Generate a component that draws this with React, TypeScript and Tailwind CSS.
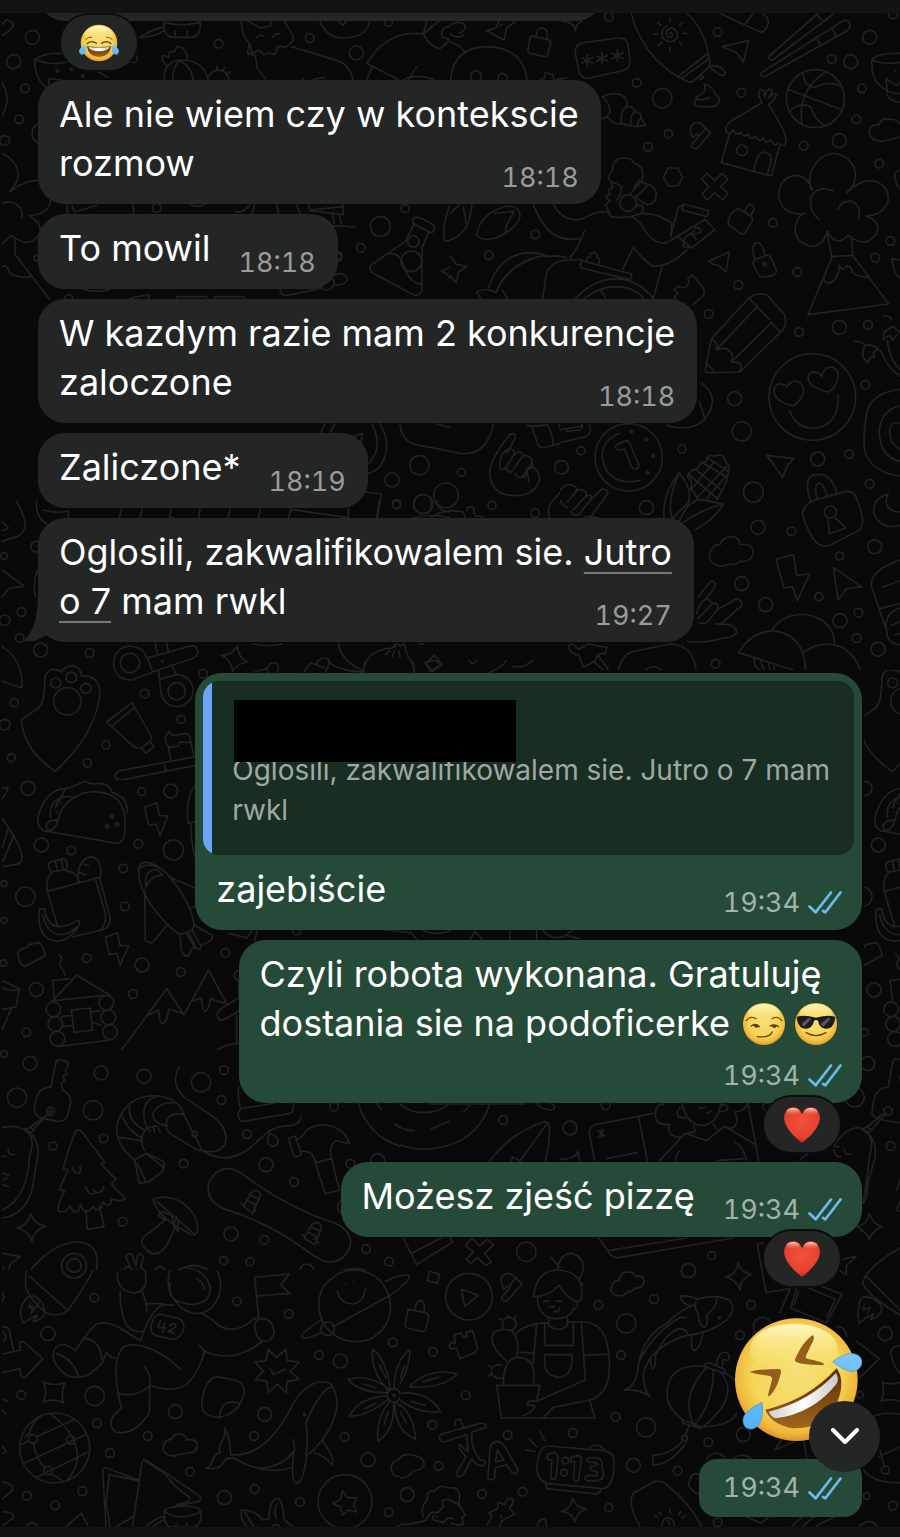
import React from 'react';

type Doodles = {
  x: number;
  y: number;
  w: number;
  h: number;
  left?: number;
  top?: number;
  circles: number[][];
  paths: string[];
};

// every sheet is drawn at three times its size, then placed at x / y
// left and top trim the part that a neighbouring sheet already draws
const sheets: Doodles[] = [
  {
    x: 0,
    y: 0,
    w: 450,
    h: 300,
    circles: [
      [97, 112, 21], [41, 185, 21], [75, 265, 13], [57, 358, 13], [14, 422, 15], [128, 400, 32],
      [656, 131, 13], [929, 114, 13], [1069, 159, 21], [1166, 67, 12], [400, 176, 12],
      [470, 624, 13], [1215, 626, 12], [1141, 679, 30], [1082, 743, 13], [1240, 724, 17], [1234, 784, 31],
      [1012, 770, 15], [110, 774, 8], [206, 897, 13], [980, 848, 22],
      [172, 212, 4], [214, 208, 3], [248, 228, 4],
    ],
    paths: [
      'M8 72 Q20 50 34 66 Q46 78 30 90 L8 106',
      'M104 178 Q104 240 140 262 M104 178 Q140 154 200 162 M104 178 Q150 198 200 186 M146 262 V236 L184 240 M292 214 L322 232',
      'M8 250 Q34 300 8 344',
      'M412 118 Q450 90 492 80 M420 114 Q470 108 492 92 M492 66 Q490 112 520 112 H572 Q602 112 602 66 M492 66 Q545 84 602 66 M526 92 V110 M562 92 V106',
      'M492 240 Q490 180 550 180 Q610 182 624 238 M518 240 Q518 200 540 182 Q575 200 580 240 M500 198 Q480 180 490 166 L506 172 Q505 148 522 156 L532 138 Q562 145 562 176',
      'M624 232 Q640 205 664 212 Q686 218 686 238 M652 210 L650 200 M668 212 L674 202 M680 224 L690 216',
      'M724 60 Q724 110 748 130 L742 160 L766 166 L772 205 L796 236 M748 130 L756 160 L776 150 L790 164 L808 158 L824 164 L834 138 L856 142 L880 122 L878 104 L850 60 M740 60 L780 84 L812 78 L812 60 M768 114 Q776 104 790 108 M818 110 Q828 98 840 102 M874 140 L1000 178 Q1050 190 1058 238 M905 240 L910 236 M940 238 L974 232',
      'M960 64 Q980 116 1036 114 Q1100 112 1110 62 M1016 64 L1028 76 L1040 62',
      'M1100 190 L1130 150 Q1190 90 1270 102 L1320 60 M1270 102 Q1290 140 1320 146 L1350 120 M1270 102 L1280 64 M1350 80 Q1320 80 1326 110 L1350 120 M1100 190 L1196 240 M1100 240 L1116 202 M1226 238 L1250 200 M1212 238 Q1250 220 1300 238',
      'M202 612 V640 M216 616 L224 636 L290 616 M398 612 Q402 630 400 642 M570 612 Q590 625 612 614 M706 636 Q730 640 752 612 M764 612 L756 642 M830 612 L836 642 M890 612 L900 642 M925 612 L930 632 L1030 644 V614 M930 630 L1028 620 M998 642 L1002 672 M1018 642 L1024 674 M990 680 Q1020 674 1064 682',
      'M1244 652 Q1256 648 1300 674 Q1308 686 1296 698 Q1286 698 1240 670 Q1234 660 1244 652 M1242 672 L1216 724 L1112 796 Q1106 804 1116 818 L1240 884 Q1264 890 1266 866 V742 L1286 698 M1166 762 Q1200 756 1212 800 Q1230 850 1264 852',
      'M1350 615 Q1325 680 1334 722 H1350 M1350 800 L1324 814 Q1345 820 1350 835',
      'M996 754 H1010 Q1036 770 1010 784 M1000 826 L1024 820 Q1046 830 1040 842 Q1036 854 1000 856 M840 868 Q842 888 860 886 L970 864',
      'M8 460 Q90 510 28 576 Q100 522 146 552 M8 610 Q40 596 62 626 Q70 640 64 654 M152 600 Q150 640 88 648 Q130 670 118 700 Q90 750 34 706 L8 730 M8 800 Q20 790 30 820 Q60 836 94 830',
      'M44 720 L46 764 L150 900',
      'M384 900 Q400 888 450 886 L442 900 M528 900 L530 890 H620 V900 M642 900 V890 H730 L736 900 M250 868 Q290 880 330 868',
    ],
  },
  {
    x: 450,
    y: 0,
    w: 450,
    h: 320,
    circles: [
      [476, 50, 13], [560, 248, 13], [637, 295, 29], [803, 96, 13], [874, 278, 13], [1145, 177, 13], [1259, 112, 21],
      [1202, 185, 21], [1236, 265, 13],
      [655, 401, 12], [594, 441, 13], [1061, 437, 13], [1168, 422, 21], [1219, 358, 13],
      [1288, 491, 13], [1329, 43, 13], [969, 668, 13], [256, 703, 13], [116, 766, 13], [1042, 816, 13],
      [865, 855, 13], [776, 942, 13], [1276, 773, 13], [1321, 723, 13], [876, 451, 16], [1096, 296, 87],
      [944, 792, 5], [534, 609, 25],
    ],
    paths: [
      'M0 74 Q30 60 44 74 Q50 90 30 100 M0 100 Q20 120 42 104 M0 126 Q30 134 46 158 M2 238 Q10 140 115 140 Q220 146 231 238 M62 238 Q62 210 78 212 Q94 214 94 238 M144 238 Q144 220 158 220 Q172 222 172 238 M270 238 L284 234 L286 216 L308 224 L312 240 M322 238 L350 234',
      'M110 92 L162 120 L170 84 L194 66 M110 92 L138 84 L148 62 M336 64 Q376 66 376 92 Q380 68 396 64 M148 80 L156 72',
      'M244 108 L292 118 Q302 120 302 130 L294 162 Q292 170 284 170 L240 160 Q232 158 234 150 L240 114 Q242 108 244 108 M258 110 Q260 80 280 84 Q298 92 290 116',
      'M402 128 L504 114 Q530 112 534 136 L540 182 Q542 206 518 212 L418 234 Q392 238 386 210 L376 160 Q372 134 402 128 M412 164 V198 M396 174 L428 190 M428 172 L396 190 M456 158 V192 M440 168 L472 184 M472 166 L440 184 M502 150 V184 M486 160 L518 176 M518 158 L486 176',
      'M544 42 Q580 170 684 230 L716 246 Q728 248 736 238 L774 204 Q784 196 778 178 Q766 90 712 42 M684 230 L772 162 M694 236 L778 176 M740 234 L756 226 L762 232 L748 240 M782 204 L788 196 Q820 200 826 218 Q824 230 812 226 Z',
      'M660 100 Q664 94 668 102 Q668 114 656 112 Q644 104 650 92 Q666 76 680 94 Q688 116 668 124 Q640 128 636 104 Q634 84 652 78 M660 66 V54 M660 142 V154 M622 102 H612 M698 100 H710 M632 76 L624 68 M688 76 L698 66 M634 128 L624 136 M688 126 L696 134',
      'M816 140 L896 122 L880 186 L860 158 Z M814 42 L930 96 Q940 98 948 86 Q966 60 940 42 M886 72 L908 42',
      'M1102 42 L958 168 Q954 182 968 180 L1150 42 M1100 44 L1116 60 M934 218 L1180 62 Q1196 56 1200 74 Q1202 86 1188 94 L944 230 Q930 232 934 218 M1098 112 L1112 134 M1144 82 L1158 106',
      'M736 296 Q744 284 758 282 Q770 268 762 252 Q790 258 796 284 Q810 290 808 304 Q802 320 784 320 H750 Q732 320 734 306 Q740 294 760 300 L780 292',
      'M456 290 Q480 310 480 334 Q476 352 456 356 M458 290 Q490 274 516 286 Q536 300 530 320 Q510 332 514 370 Q496 380 474 352 M530 320 Q550 316 554 336 Q536 352 544 378 Q526 376 514 370 M554 336 Q574 336 574 354 Q564 360 562 380 L544 378 M574 354 L586 376 L562 380',
      'M722 394 Q718 376 736 368 Q750 364 762 380 L782 398 L742 444 Q734 450 724 440 Q722 434 730 428 L748 406 L742 402 L730 412 Q722 406 722 394 M748 406 L768 384',
      'M936 308 L838 366 Q822 384 830 398 Q842 404 850 390 Q860 412 872 396 Q880 416 894 402 Q902 424 916 408 Q926 430 940 414 Q948 434 962 420 Q972 442 986 430 Q1006 448 1008 416 Q1004 390 956 314 M936 308 Q922 284 930 268 Q944 266 944 290 Q952 260 966 270 Q964 286 956 294 Q970 276 980 284 Q972 302 956 314 M838 402 L814 488 L964 528 L988 440 M912 512 Q920 456 944 456 Q970 462 962 488 L952 524',
      'M1058 218 Q1062 260 1096 262 Q1130 242 1172 258 M1014 268 L1176 330 M1128 216 Q1040 270 1056 374 M1018 334 Q1050 304 1082 320 Q1100 370 1128 376',
      'M1350 160 Q1290 158 1266 178 Q1262 230 1286 254 Q1320 285 1350 280 M1266 178 Q1290 194 1350 188 M1308 236 L1340 256 L1350 248 M1308 236 L1312 276 M1335 212 H1336 M1310 282 Q1320 306 1350 306',
      'M1350 372 Q1340 356 1318 358 Q1294 352 1288 374 Q1258 372 1258 398 Q1262 424 1296 424 Q1320 420 1350 410',
      'M1084 570 Q1066 520 1108 478 Q1150 444 1192 476 Q1228 506 1210 556 L1190 578 Q1240 530 1282 546 Q1320 564 1314 604 Q1300 646 1248 648 Q1294 664 1280 700 Q1250 748 1194 706 Q1160 744 1132 694 Q1118 744 1078 738 Q1030 722 1036 680 Q1042 646 1064 640 Q1002 650 986 592 Q984 536 1034 526 Q1070 526 1088 568 M1148 572 Q1100 556 1084 590 Q1074 634 1108 658 M1164 628 Q1176 600 1204 604 Q1236 618 1226 656 M1130 694 L1146 772 L1074 944 L1316 912 L1208 766 L1204 710 M1144 770 L1206 766 M1168 796 Q1166 836 1142 848 Q1120 854 1122 828 M1168 796 Q1176 816 1188 800 Q1204 796 1206 816 Q1220 830 1254 832',
      'M484 546 Q466 530 488 512 Q486 476 522 474 Q546 474 552 490 Q586 496 576 544 Q540 580 540 586 M552 562 L568 542 L594 554 Q622 560 618 590 Q614 614 590 614 L556 592 L590 560 M484 546 L498 550 L514 560 L512 582 L500 600 M484 546 L488 562 L474 570 L480 582 L466 590 L480 604 L466 614 L474 628 Q472 654 502 652 Q540 654 576 640 L580 620 L560 614',
      'M654 504 L684 504 L698 532 L684 558 H656 L640 532 Z M754 536 L772 520 L794 542 L816 520 L834 538 L812 560 L834 580 L818 600 L794 578 L772 600 L756 582 L776 560 Z',
      'M250 614 Q290 720 364 718 L386 716 M310 612 Q340 670 400 656 Q440 630 480 636 M404 692 L382 742 L360 774 M576 640 Q620 640 666 668 L662 710 L684 626 Q690 616 700 618 M700 612 L776 632 L770 650 L696 630 Z M546 650 Q570 660 590 700 Q620 736 650 728 L680 710 L766 658 L794 690 L724 744 L682 708 M728 744 L700 740 Q700 704 726 700 L734 690 M734 682 Q754 682 752 696 L728 704 L740 720 M712 748 Q660 802 606 798 Q580 780 550 742 L518 808 M636 800 L610 895',
      'M0 720 Q60 700 66 612 M40 620 L48 668 M0 640 L28 614 M80 704 Q90 640 170 618 Q210 616 210 650 Q200 690 130 716 Q84 722 80 704 M134 640 L192 634 L168 680 L166 702 M2 768 L18 792 L50 800 L26 816 L18 848 L0 826',
      'M80 876 Q110 860 138 878 Q180 780 290 766 M116 862 Q150 760 240 758 Q270 758 290 770 Q320 764 350 774 M138 878 Q160 810 240 780 M158 872 L174 896 M80 876 L92 896 M278 896 L288 826 Q300 780 360 780 L392 778 M396 782 L544 822 Q548 838 536 838 L394 804 Q386 792 396 782 M408 784 Q410 768 422 770 Q416 756 432 758 Q446 762 440 772 L448 776 V790 M376 896 Q430 838 500 836 Q570 842 610 896 M402 896 Q450 860 495 860 Q560 862 580 896 M452 870 L466 892',
      'M834 664 Q842 634 864 626 L904 648 Q914 658 900 674 L884 700 Q876 706 868 698 L836 674 Z M886 636 Q886 616 904 612 Q922 628 898 648',
      'M776 784 L838 756 L828 816 L806 796 Q790 796 776 784 M908 790 L916 778 L950 766 Q962 766 966 780 L978 808 Q982 822 968 826 L940 832 Q928 832 924 820 Z M914 778 Q902 736 918 728 Q936 724 946 766',
      'M726 824 L758 860 Q768 880 758 890 L728 914 M726 824 L714 836 Q720 856 704 862 Q690 864 688 858 L672 868 L684 880 L672 892 L680 898 M784 1010 L898 894 Q920 876 950 884 L1004 944 Q1010 970 1000 990 M898 894 L966 968 L940 990 M922 920 L836 1010',
      'M1350 510 Q1330 516 1334 530 Q1340 560 1350 566 M1350 780 L1326 776 Q1330 820 1350 835 M1300 948 Q1326 945 1326 970 Q1330 985 1350 986',
    ],
  },
  {
    x: 560,
    y: 320,
    w: 340,
    h: 350,
    circles: [
      [717, 36, 13], [838, 22, 21], [924, 15, 13], [524, 236, 21], [545, 334, 29], [366, 387, 12], [206, 412, 101],
      [63, 392, 12], [5, 442, 20], [259, 563, 21], [580, 516, 30], [594, 622, 21], [694, 634, 13], [545, 791, 21],
      [617, 854, 21], [777, 830, 12], [839, 708, 12], [944, 680, 21], [929, 491, 13], [867, 402, 13],
      [773, 417, 21], [916, 194, 13], [757, 231, 130], [840, 902, 21], [895, 878, 13], [890, 954, 13],
      [954, 988, 21], [467, 1031, 13], [811, 576, 18], [215, 334, 4], [258, 358, 4], [279, 407, 4], [263, 459, 4],
    ],
    paths: [
      'M454 56 L436 150 Q434 158 444 158 L540 156 L660 38 Q680 24 676 0 M454 56 L506 0 M472 86 L554 0 M516 124 L636 6 M632 6 L662 36 M454 56 Q474 64 470 90 Q496 78 510 94 Q524 106 514 126 Q540 124 544 140 Q542 152 536 156 M438 130 L466 156',
      'M702 258 Q646 246 642 214 Q642 190 664 192 Q678 194 680 202 Q690 180 712 184 Q736 196 728 224 Q722 240 702 258 M806 216 Q746 204 744 174 Q748 154 766 156 Q784 160 784 170 Q794 136 820 142 Q840 154 832 180 Q826 204 806 216 M688 272 Q712 330 770 324 Q838 312 834 224',
      'M884 64 Q900 62 916 76 Q940 70 964 96 Q980 140 1020 168 M916 76 Q902 96 912 116 L924 128 L930 112 L944 112 L940 98 L950 90 M970 58 Q966 30 1000 20 L1018 36 M970 58 L990 46 L998 60 L1010 44 M982 62 Q988 120 1020 148',
      'M1020 208 Q930 220 920 280 Q904 370 920 410 Q950 460 1020 468 M1020 256 Q956 276 958 340 Q962 410 1020 424 M1020 310 Q996 300 988 330 Q988 370 1020 388',
      'M168 376 L196 362 Q206 362 210 372 L236 434 Q238 444 226 448 Q218 446 214 438 L194 388 L174 390 Q164 384 168 376 M178 340 Q118 366 128 420 Q146 500 240 482',
      'M426 190 Q480 230 440 290 Q400 340 320 316 M418 246 L436 300 M88 312 Q102 350 60 354 L0 368 M0 330 L64 318 M20 334 L60 330 Q68 325 66 312',
      'M314 602 Q300 530 358 458 Q400 510 384 550 Q340 590 334 602 M358 458 Q320 540 336 596 M358 604 Q380 546 420 538 L490 552 Q460 602 404 630 M490 552 Q430 566 368 608 M382 470 Q390 446 410 450 Q420 424 440 424 Q440 402 464 408 Q490 396 496 424 Q514 440 504 462 Q502 490 470 540 M382 470 Q400 480 392 506 Q408 522 412 538 M384 462 L470 534 M404 446 L486 512 M392 510 L464 424 M410 534 L500 440 M424 426 L500 470 M440 412 L504 454 M440 536 L500 466',
      'M620 406 L702 416 L682 436 L668 472 Z M752 544 Q730 480 758 466 Q810 450 830 516 M772 538 Q760 498 776 490 Q790 488 802 530 M764 540 L860 514 Q880 514 888 530 Q910 590 908 606 Q904 634 880 640 L810 676 Q780 684 760 658 Q728 600 728 580 Q730 554 764 540 M804 596 L808 642 L858 624 L824 592',
      'M984 522 Q930 540 944 586 Q968 632 1020 616 M984 522 Q964 572 1020 576 M480 738 Q446 732 448 702 Q454 674 480 674 Q490 648 518 650 Q540 654 540 674 Q580 670 580 698 Q574 728 540 724 Q530 736 510 732 Q490 740 480 738 M648 718 L700 704 L710 766 L748 762 L712 842 L698 800 L672 804 Z M820 742 L904 800 L860 806 L834 840 Z',
      'M1020 720 Q930 750 934 798 L980 932 Q980 970 1020 974 M966 802 L1020 782 M960 866 L1020 850 M994 916 L1020 904 M1020 864 Q970 880 980 932 M1006 944 L1020 940',
      'M0 540 Q6 558 22 562 M0 512 Q20 485 42 498 Q58 504 44 520 L22 546 M44 520 Q60 500 76 514 Q84 522 74 532 L40 570 M76 530 Q100 516 92 540 L56 584 Q38 590 32 574 M92 540 L124 508 Q142 504 144 520 L90 594 M74 590 H92 Q110 590 122 598',
      'M414 832 L448 788 Q462 778 466 794 Q464 806 432 842 M410 880 Q414 850 440 836 L458 850 L414 896 M458 850 Q476 846 474 866 L444 904 Q426 916 418 906 M474 868 L530 836 Q548 840 546 856 L484 910 M466 912 Q530 910 530 938 Q520 954 490 954 Q430 972 382 964',
      'M26 978 L36 970 L56 988 L84 972 L140 982 L136 1000 L114 1004 L106 1022 L70 1042 L56 1006 Q28 1000 26 978 M114 1006 L146 1050 M100 1024 L130 1050',
      'M176 1050 Q184 1004 220 994 L330 972 Q400 974 408 1050 M256 1050 Q280 1030 304 1050 M636 930 Q670 878 740 884 Q820 900 824 970 M536 998 Q570 936 640 932 Q730 944 736 1040 L736 1050 M536 998 L700 1050 M732 996 Q790 956 850 984 Q890 1010 900 1050 M582 1018 Q584 1044 600 1050 M602 1024 L612 1048 M626 1032 L630 1050 M642 1038 V1050',
    ],
  },
  {
    x: 0,
    y: 500,
    w: 450,
    h: 280,
    circles: [
      [12, 168, 10], [64, 336, 13], [14, 361, 16], [59, 414, 13], [122, 450, 21], [269, 459, 13], [434, 581, 13],
      [609, 521, 13], [543, 658, 12], [318, 735, 12], [262, 789, 12], [43, 608, 12], [14, 674, 16], [34, 773, 12],
      [390, 489, 29], [530, 574, 26], [167, 549, 15], [214, 532, 16], [258, 565, 15], [202, 604, 41],
      [1189, 14, 12], [1268, 14, 27], [487, 484, 2], [1345, 0, 35], [108, 140, 16],
    ],
    paths: [
      'M48 0 Q70 40 76 70 Q76 100 50 110 L6 124 M6 64 L26 84 L6 92 M110 0 Q104 50 140 72 M130 30 Q160 40 206 34 L204 56 M364 28 L358 54 M426 28 L420 54 M514 28 L508 50 L520 54 M600 28 L596 54 M690 28 L684 54 M780 28 L776 54 M872 28 L1040 52 M872 28 L866 54 M1044 28 L1046 52 M1138 0 L1130 54 M1240 54 Q1290 40 1350 52',
      'M6 210 L72 258 L26 266 L6 290 M106 290 Q98 250 112 210 M6 440 Q70 480 66 564 L6 544',
      'M64 658 L116 624 Q136 600 134 540 Q136 510 160 508 Q180 510 184 516 Q196 494 222 498 Q244 504 244 528 Q294 524 300 576 Q290 700 166 814 Q70 750 64 658',
      'M458 516 L396 540 Q346 540 340 492 Q346 440 392 438 Q434 444 440 474 L572 438 Q590 436 594 454 Q594 466 580 474 Z M444 478 L458 516 M466 430 L472 464 M500 430 L506 458 M476 512 L482 574 Q490 620 534 620 Q580 610 580 566 Q570 526 530 524 L514 496 M478 538 L530 524',
      'M664 466 Q696 466 712 438 Q714 472 742 486 Q712 490 698 514 Q694 480 664 466 M764 516 L800 506 L810 490 Q834 484 836 500 L832 516 M800 506 L804 518 M912 516 L932 488 L976 504 M948 492 Q962 468 984 476 Q992 490 976 516',
      'M1016 430 Q1020 480 1092 514 M1090 516 Q1096 450 1176 444 L1190 430 L1200 438 L1212 430 Q1220 470 1240 490 L1242 516 M1182 434 L1186 442 M1170 452 L1156 464 M1182 452 L1178 470 M1196 452 L1200 472 M760 432 Q800 442 846 432 M1255 430 Q1264 436 1272 430 M1276 490 L1304 466 L1326 494 L1298 514 Z',
      'M320 666 L396 608 L452 706 Q456 716 450 724 L424 744 Q414 746 404 742 Z M334 680 L404 622 M424 744 L438 760 L462 740 L450 724',
      'M586 770 L360 812 Q344 818 346 832 Q352 842 366 840 L588 796 M490 788 L498 812 M512 780 L506 742 Q490 720 500 704 L510 694 Q512 708 528 706 L556 700 Q572 702 572 726 L582 766 M506 742 L534 738 L540 726 L574 728',
    ],
  },
  {
    x: 0,
    y: 780,
    w: 260,
    h: 270,
    circles: [
      [84, 25, 21], [512, 33, 21], [425, 35, 12], [124, 195, 21], [214, 211, 13], [415, 191, 13], [520, 210, 30],
      [76, 350, 29], [370, 265, 13], [375, 379, 13], [260, 534, 13], [426, 555, 21], [676, 518, 13], [542, 576, 13],
      [109, 629, 21], [399, 642, 13], [79, 757, 13], [12, 311, 9], [12, 421, 9], [10, 549, 10],
      [336, 109, 5], [321, 139, 5], [351, 133, 5],
      [160, 688, 22], [166, 732, 22], [172, 776, 22], [319, 668, 22], [325, 712, 22], [330, 756, 22], [718, 586, 15],
    ],
    paths: [
      'M6 24 L24 22 Q20 40 6 56',
      'M130 152 L350 190 Q370 190 374 162 Q386 70 330 44 Q270 22 220 54 Q180 80 174 120 Q166 148 148 152 Q128 140 148 124 L174 118 M130 152 Q100 132 124 82 Q150 26 196 26 L218 20 L232 14 L252 4 L276 12 L304 10 Q330 14 336 38 Q386 50 380 98 M196 26 L184 52 M152 112 Q144 70 184 52 Q210 46 222 54 M184 52 Q172 64 166 84 M172 76 V78 M182 68 V70 M170 94 V96',
      'M434 82 L470 68 L478 106 L504 108 L480 166 L468 132 L446 136 Z M316 472 L352 458 L360 496 L386 498 L360 556 L350 520 L328 524 Z M8 118 Q60 190 66 230 Q68 250 46 254 L8 260 M26 142 L8 200 M42 166 L8 244',
      'M586 16 Q556 50 564 130 L584 126 M572 132 Q574 200 588 240',
      'M150 246 L190 236 Q200 238 202 260 Q200 268 190 270 L156 276 Q146 272 146 252 Z M166 242 L172 272 M184 238 L190 268 M156 276 Q134 300 142 334 L172 436 M142 334 L298 292 L330 410 Q334 440 306 450 L220 470 M198 272 Q232 276 238 306 M234 306 Q230 240 272 230 Q306 232 302 292 M238 278 L258 284 M250 252 L266 258 M286 296 L316 400 Q320 430 300 452 M118 388 L134 386 Q138 430 170 440 Q210 440 232 420 Q246 424 232 444 Q200 490 160 482 Q110 470 118 388 M128 404 Q140 460 180 464 Q212 462 230 440',
      'M420 252 Q450 234 500 280 Q570 360 582 430 Q582 452 564 456 L540 464 Q500 440 450 370 Q404 300 420 252 M438 320 Q430 270 470 268 L488 286 Q454 284 438 320 M420 262 Q470 240 510 292 L590 326 M434 330 L436 480 Q446 494 460 486 L500 436 M570 384 L590 378 M540 464 L544 510 Q548 530 564 528 L584 494 M584 436 L636 466 Q640 480 624 486 L606 494 M564 456 L590 506 Q604 510 602 496 L576 450 M560 462 L586 504',
      'M52 522 Q56 504 82 502 L86 494 L116 488 Q126 490 136 526 L78 558 Q66 560 60 546 Z M176 522 Q190 536 182 544 Q174 552 186 566 Q192 572 194 584 M158 602 L208 596 M158 602 L164 662 M156 664 L230 586 L330 646 M164 662 L310 646 M184 710 L214 706 M274 696 L300 692 M184 740 L218 736 M276 726 L304 736 M172 800 L330 780 M214 690 L270 684 L278 750 L222 758 Z',
      'M8 602 L58 626 L48 680 L8 688 M8 624 Q30 634 56 630 M34 686 L8 746',
      'M356 822 L500 626 L552 704 L626 570 L680 672 M356 822 H722 M444 706 L476 690 Q476 730 488 730 Q502 726 506 688 L520 692 L548 700 M574 664 L604 654 Q608 694 614 694 Q628 690 632 654 L642 660 L672 670 M722 650 L660 688 Q644 700 658 720 Q670 724 722 690 M710 706 V788 M636 822 Q670 790 722 790 M716 602 V648 M688 460 L740 474 L756 452 M764 484 L770 455',
    ],
  },
  {
    x: 0,
    y: 1050,
    w: 400,
    h: 220,
    circles: [
      [90, 40, 21], [303, 69, 21], [432, 79, 21], [51, 143, 29], [279, 181, 29], [603, 97, 29], [672, 60, 13], [664, 150, 13],
      [311, 265, 13], [159, 288, 12], [551, 341, 13], [741, 252, 13], [798, 344, 21], [882, 396, 13], [1002, 170, 13],
      [1051, 341, 13], [1133, 332, 21], [368, 515, 13], [693, 552, 21], [793, 569, 13], [671, 632, 12], [750, 635, 12],
      [480, 662, 12], [1098, 597, 13], [1167, 635, 13], [920, 663, 21], [1034, 470, 21], [222, 647, 37], [222, 647, 21],
      [152, 184, 12], [152, 184, 4], [584, 252, 8], [12, 12, 10],
    ],
    paths: [
      'M152 112 L168 36 Q174 26 186 30 Q206 34 204 46 L196 60 L202 72 L190 78 L194 92 L184 98 L188 122 Q214 130 212 160 L202 200 Q190 216 170 214 L118 202 Q100 190 104 170 Q108 112 152 112 M146 190 L98 240 M134 200 L90 232 M78 238 L92 232 L102 240 L90 248 Z',
      'M8 232 Q60 220 90 254 Q104 280 88 320 Q84 440 8 480 M74 236 Q116 260 114 310 Q108 350 100 400 Q86 490 8 504 M24 298 Q24 316 44 314 M8 318 L18 320 M8 370 L26 376 M8 404 L26 410 M10 390 L20 384',
      'M226 246 Q236 232 246 246 L314 336 L304 344 L348 388 L334 402 L374 444 Q372 456 350 450 L334 448 Q332 470 318 464 L308 456 Q306 484 286 478 L278 470 Q264 494 250 480 L242 464 Q236 492 220 484 L210 468 Q200 490 176 484 Q168 470 194 424 L178 418 L204 360 L190 356 Q200 310 226 246 M218 352 Q222 372 236 370 Q244 362 240 350 M256 410 Q268 438 286 430 M280 418 Q288 432 300 426 Q312 420 310 410 M258 480 L262 538 L312 530 L298 468',
      'M52 534 Q88 524 92 490 Q104 526 136 528 Q100 542 96 574 Q84 540 52 534 M8 610 L60 620 L30 644 L24 674 L8 652',
      'M404 330 Q340 280 352 220 Q380 130 480 138 Q540 150 552 196 L604 296 Q600 306 584 296 L510 250 Q490 230 504 204 Q520 186 552 194 M504 228 L480 222 Q454 210 460 186 Q476 158 520 158 M440 232 Q420 180 446 152 Q464 138 480 138 M432 240 Q380 210 390 170 M426 272 L358 262 M434 300 Q424 290 426 262 Q430 230 470 228 M446 232 L450 246 M460 232 L464 246 M474 234 L482 248 M366 200 Q390 250 428 264 M404 330 L438 310 L490 334 Q496 350 488 364 L446 396 L418 400 Z M412 340 L438 396 M438 310 L490 352',
      'M538 50 Q510 100 550 140 L640 200 Q690 240 674 284 Q650 316 604 300 Q680 350 750 294 L806 244 Q840 226 870 228 Q900 224 904 198 M808 250 Q796 280 816 290 Q838 286 834 268 Q826 254 808 250',
      'M716 110 Q712 150 722 176 M722 176 Q706 196 722 212 Q730 216 744 212 L870 190 Q884 186 880 160 M722 176 L820 160',
      'M866 264 L886 258 L904 314 L886 322 Q880 320 866 264 M892 268 Q910 260 920 240 Q960 216 1000 230 Q1040 246 1048 280 Q1020 276 1010 272 Q984 284 996 330 L1018 420 L976 432 L946 338 L996 326 M904 304 Q940 300 946 338',
      'M1074 160 Q1120 300 1280 298 M1130 160 L1144 180 M1186 222 Q1200 234 1216 238 M1200 160 L1212 172',
      'M670 476 Q616 450 626 400 Q650 346 700 358 Q720 364 760 396 Q880 480 1010 522 Q1060 546 1050 590 Q1030 640 980 636 Q960 632 900 588 Q800 516 670 476 M730 470 L752 430 Q770 410 782 434 L758 490 Z M738 450 L770 466 M748 434 L778 448 M722 458 L734 470 M760 472 L768 486 M912 564 L934 526 Q954 508 966 530 L944 584 Z M922 546 L952 562 M932 530 L962 544 M906 552 L916 562 M944 566 L956 580',
      'M460 448 Q500 430 550 460 Q600 500 592 546 Q580 564 560 546 Q470 500 460 448 M470 454 L580 550 M488 484 L474 496 L496 510 L430 562 Q416 576 440 600 Q464 620 484 604 Q510 580 524 530 L534 546 L534 516 M488 486 L516 496 L520 526 L530 500',
      'M78 718 Q70 680 104 646 Q160 584 224 576 Q286 574 292 630 Q290 680 272 718 M84 674 L134 718',
      'M352 718 L350 680 Q348 662 364 660 Q380 668 376 690 L360 690 M374 660 Q380 644 394 656 Q400 680 386 680 L376 676 M390 652 L378 620 Q388 602 398 620 L408 648 L412 618 Q426 604 430 622 L422 652 Q440 662 438 700 L432 718 M412 656 L416 690',
      'M508 718 Q512 650 584 646 Q650 656 656 718 M556 654 Q620 656 632 718 M594 686 Q610 700 612 718 M768 718 L764 684 L868 672 L840 706 L852 718 M968 718 Q990 660 1066 656 Q1130 660 1156 700 Q1200 670 1224 676 Q1232 690 1202 718 M1158 694 L1166 714',
      'M1038 700 V701 M1060 694 V695',
    ],
  },
  {
    x: 0,
    y: 1270,
    w: 400,
    h: 257,
    circles: [
      [283, 83, 13], [144, 191, 21], [711, 94, 13], [866, 132, 13], [284, 378, 29], [64, 375, 13], [291, 460, 13],
      [526, 425, 21], [443, 498, 13], [330, 549, 13], [570, 605, 13], [164, 534, 105], [99, 507, 13], [212, 510, 13],
      [144, 602, 13], [794, 433, 21], [762, 498, 13], [957, 255, 13], [1021, 273, 21], [1034, 501, 13], [1104, 569, 21],
      [764, 657, 13], [673, 683, 21], [900, 696, 13], [1166, 727, 13],
      [1178, 217, 13], [247, 663, 13], [81, 677, 13], [166, 706, 13], [1035, 695, 81],
      [1182, 376, 20], [1182, 376, 3], [914, 434, 3], [983, 176, 20],
    ],
    paths: [
      'M78 54 Q90 90 140 130 Q180 142 204 120 Q250 60 280 0 M78 54 Q74 30 80 0 M88 18 L204 122 M76 88 Q90 76 100 78 Q134 90 134 130 Q128 150 100 154 L112 136 L90 146 L70 160 Q50 120 78 88 M92 100 L86 114 L98 108 L94 130 L116 98 M186 0 Q200 24 222 24 Q244 24 258 0 M206 0 Q222 14 240 0',
      'M352 10 Q350 40 372 60 Q420 84 438 40 L436 0 M360 64 Q360 130 380 166 Q400 190 430 184 M424 60 Q440 90 440 124 M438 102 Q470 98 496 104 L520 106 M510 0 Q490 60 540 110 Q590 150 636 112 Q680 60 650 0 M512 40 Q500 76 530 92 Q590 116 622 86 Q650 40 590 0 M590 26 Q610 34 614 60',
      'M490 104 Q450 120 422 212 L370 180 Q320 150 290 162 Q270 176 226 242 Q190 212 168 232 Q140 270 200 316 Q230 330 270 312 L306 280 L320 248 L334 262 L346 264 M256 206 Q300 210 306 270 M168 250 Q220 266 236 322 M354 264 Q360 224 400 224 Q470 230 542 298 M352 264 Q340 320 364 414 L344 434 Q320 460 346 486 Q400 500 448 430 L450 320 L434 288 M354 370 Q410 384 450 346 Q520 370 560 344 Q600 300 614 244 L598 226 M612 242 Q700 284 784 216 M610 132 Q640 150 650 162 Q700 200 760 148 L774 142',
      'M480 132 L536 146 Q556 152 550 180 Q540 208 516 208 L466 196 Q450 190 454 164 Q460 136 480 132 M482 152 L474 172 L500 174 M494 158 L488 188 M508 168 Q520 154 528 168 Q528 174 504 184 L522 190',
      'M764 22 L868 12 L842 44 L868 70 L772 78 M764 22 L776 140 M764 168 Q764 144 792 146 Q820 150 822 190 Q816 214 790 214 Q766 206 764 168',
      'M1166 74 Q1190 160 1110 208 Q1030 232 976 170 Q940 110 970 50 Q1010 0 1066 0 Q1140 6 1166 74 M1156 34 Q1210 8 1226 18 Q1230 36 1170 76 L1000 170 M966 148 Q890 196 908 204 Q930 206 966 186 M1012 62 Q1020 100 1056 102 Q1090 100 1096 56 M1038 40 V41 M1060 36 V37',
      'M764 276 L798 272 L804 238 L830 262 L858 238 L862 272 L898 276 L870 304 L898 328 L862 334 L858 368 L832 342 L806 368 L800 334 L766 328 L790 304 Z M810 296 L820 314 L856 298',
      'M652 320 L704 330 Q736 340 732 370 Q720 430 656 442 Q600 440 606 394 Q616 324 652 320 M658 440 Q664 396 694 396 L722 400',
      'M130 336 Q160 350 194 338 Q182 370 190 398 Q160 384 130 396 Q144 366 130 336 M8 252 L62 240 Q52 210 72 216 L128 266 L78 320 Q60 330 60 296 L8 308 M8 170 Q28 170 30 190 L40 240 M8 184 Q24 196 12 214 M8 70 L12 80 L8 92',
      'M124 438 Q100 450 88 490 L76 500 M154 434 Q230 490 232 560 Q230 600 200 632 M64 524 L88 512 M110 500 L220 450 M72 580 L256 494 M110 622 L260 548 M100 520 Q110 570 136 594 M156 612 L190 634 M8 388 L22 394 M8 420 L16 430 M8 530 L18 546 L8 550',
      'M692 554 Q800 564 880 400 Q930 320 990 340 Q1030 390 992 470 Q960 530 920 556 Q910 640 890 640 Q870 636 882 540 M692 554 Q690 500 674 474 Q678 500 662 520 Q654 546 662 546 Q640 556 636 576 Q630 592 618 594 Q660 602 672 574 Q680 560 704 566 Q790 616 874 594 M780 596 Q850 590 884 540 L880 508 M996 350 Q960 360 918 458 Q926 520 918 556 M968 514 Q1010 570 994 584 Q980 560 944 548',
      'M510 556 Q486 550 490 530 Q494 508 514 508 Q522 490 542 492 Q560 496 560 510 Q590 504 592 528 Q588 552 562 548 Q550 556 536 552 Q522 562 510 556 M1196 620 Q1170 616 1174 590 Q1180 570 1194 570 L1202 560',
      'M1164 362 Q1110 300 1118 238 Q1160 270 1170 356 M1182 354 Q1184 300 1202 272 M1164 368 Q1080 370 1044 328 Q1110 310 1170 360 M1164 388 Q1100 440 1048 438 Q1080 380 1162 378 M1180 396 Q1186 480 1134 514 Q1126 450 1168 394 M1188 396 L1202 412 M1184 398 Q1184 440 1200 466 M1138 284 L1158 324 M1090 342 L1128 354 M1094 416 L1128 400 M1164 426 L1152 464',
      'M1028 662 L1040 682 L1070 684 L1060 706 L1070 726 L1044 720 L1028 736 L1022 712 L998 700 L1020 690 Z M318 768 L308 600 Q308 592 320 594 L414 630 M330 768 L318 700 L328 614 L414 632 M398 768 L426 576 Q430 568 440 572 L500 610 L600 680 Q606 690 596 694 L560 702 L520 712 M434 572 L496 612 Q520 650 566 680 Q574 692 560 696 L530 704 M350 768 L400 740 M440 768 Q470 742 490 740 M492 724 Q500 710 546 708 Q600 708 602 724 V750 Q596 768 580 772 H516 Q494 770 494 740 Z M494 724 Q540 756 600 726 M460 768 L490 750 M528 762 V770 M560 760 V770',
      'M724 720 Q720 750 740 768 M724 720 Q770 720 788 750 L808 746 Q806 690 836 684 Q850 700 852 748 L876 768 M734 726 L760 768 M828 744 Q820 710 834 700 M818 768 Q824 760 838 766 M200 768 L244 730 L264 768 M78 768 Q96 748 114 768 M8 636 Q50 644 34 664 L8 686 M8 726 Q46 724 38 746 L8 766 M1190 768 L1202 766',
    ],
  },
  {
    x: 400,
    y: 1230,
    w: 500,
    h: 297,
    circles: [
      [379, 65, 29], [207, 200, 70], [595, 225, 13], [679, 280, 29], [762, 207, 13], [865, 122, 21], [935, 77, 12], [1053, 224, 13],
      [1020, 316, 13], [663, 375, 13], [647, 560, 13], [738, 592, 29], [518, 609, 13], [323, 615, 13], [97, 584, 13],
      [197, 496, 13], [99, 365, 13], [116, 708, 13], [246, 792, 13], [368, 785, 13], [21, 794, 21], [626, 833, 12],
      [700, 706, 21], [833, 722, 13], [925, 637, 13], [1030, 614, 21], [1088, 290, 28], [953, 877, 13], [1456, 311, 21],
      [854, 624, 8], [492, 728, 10], [496, 692, 10], [958, 263, 3], [1400, 798, 10], [1478, 827, 13], [1380, 494, 10],
      [1456, 720, 12],
    ],
    paths: [
      'M196 46 L216 24 L238 48 L262 28 L280 44 L254 70 L274 96 L258 106 L232 82 L212 100 L198 88 L220 66 Z M10 24 L50 104 L158 36 L150 24 M36 70 L122 24 M184 178 L234 196 L194 230 Z M88 124 L118 132 L112 160 L82 152 Z M0 138 Q20 132 28 138 Q26 156 0 172',
      'M304 158 Q300 134 322 130 Q338 132 346 142 L366 162 L322 212 Q310 216 304 204 L330 172 L322 168 L312 178 Z M344 146 L328 170',
      'M596 24 L630 72 Q640 86 660 82 L1000 24 M624 62 L860 24',
      'M24 238 L78 248 Q88 252 86 262 L78 298 Q74 306 66 304 L22 294 Q14 290 16 280 Z M44 240 Q48 210 64 212 Q78 220 72 246',
      'M180 386 L170 354 Q148 362 148 346 Q156 332 166 340 L162 314 L184 310 Q190 326 200 320 L198 308 L218 302 L232 350 Q234 362 220 370 Z',
      'M400 200 Q410 120 474 120 Q540 124 546 180 L544 210 L530 216 Q500 200 476 166 Q450 200 400 200 M412 202 Q414 260 462 266 Q510 266 520 236 Q536 236 532 220 M472 120 Q478 70 516 70 Q560 84 546 130 L536 152 L550 164 M452 82 L480 112 M430 216 Q438 210 446 214 M468 214 Q476 210 484 214 M448 230 Q454 234 464 228 M462 244 Q476 248 478 234',
      'M446 264 V286 Q476 310 502 286 V264 M350 308 Q380 280 446 278 M502 276 H560 Q620 286 626 372 L554 376 M626 372 Q640 490 570 510 L460 532 L430 562 M434 282 V346 H520 V280 M410 280 L400 400 M544 280 L556 450 L410 514 Q380 508 382 524 L404 528 Q402 544 372 556 M434 374 H516 V400 Q510 440 474 442 Q434 436 434 400 Z M356 366 L400 370 M570 514 L584 564 H304 L290 466 H420 L410 514',
      'M310 466 Q310 380 356 382 Q404 386 402 440 L400 466 M318 392 Q262 340 280 310 Q300 292 334 302 Q362 330 350 380 M310 296 Q300 264 330 262 Q352 270 348 290 L338 300 M310 444 Q276 450 274 420 Q280 400 306 406 M326 264 L322 256 M342 266 L348 258 M272 410 L264 406 M274 432 L266 438 M304 270 L298 266',
      'M650 196 Q630 190 634 172 Q638 152 656 152 Q662 124 688 126 Q704 128 704 138 Q734 134 732 156 Q728 176 704 174 Q696 188 684 184 Q668 202 650 196',
      'M672 480 Q710 470 716 400 Q730 320 800 280 Q840 240 888 222 M840 198 Q850 226 870 226 M840 198 Q870 196 890 208 Q950 190 990 212 Q1010 240 980 270 Q930 310 860 316 Q750 350 730 430 Q730 480 750 500 Q720 476 672 480 M888 216 Q880 230 894 250 Q896 290 916 292 Q924 280 920 256 Q950 230 950 208 M876 320 Q870 360 886 362 Q904 346 910 306 M752 386 Q750 410 760 416 Q770 400 766 370 M720 390 Q760 310 840 262 L860 262 M770 370 Q790 320 830 298 Q860 292 862 314',
      'M976 140 Q1010 136 1014 98 Q1024 130 1056 132 Q1020 146 1020 180 Q1010 150 976 140 M1090 38 L1072 44 L1098 188 L1170 176 M1170 176 L1140 248 M1190 174 L1172 234 L1280 278 L1326 192 L1240 160 M1196 184 L1182 226 M1220 172 L1306 208 L1280 262 M1320 90 L1370 78 L1340 106 L1338 134 L1316 120',
      'M1380 0 Q1404 8 1408 30 Q1414 8 1430 0 M1500 54 Q1400 110 1388 160 Q1396 190 1500 256 M1396 136 L1500 240 M1378 280 Q1370 260 1378 226 Q1376 200 1400 200 Q1440 210 1446 236 Q1440 262 1412 268 L1420 252 L1400 262 Z M1392 226 L1390 240 L1410 232 L1404 250 M1310 290 Q1336 288 1340 320 M1370 334 L1438 386 L1378 444 M1500 346 Q1470 350 1472 370 Q1480 410 1500 430 M1446 456 Q1470 466 1500 458 M1446 456 Q1456 480 1444 514 Q1470 504 1500 514 M1420 560 Q1450 545 1500 552',
      'M1390 720 Q1420 760 1500 758 M1436 680 L1500 650 M1440 660 Q1446 690 1454 710',
      'M850 570 Q780 520 810 450 Q830 404 910 408 L980 432 Q1010 450 1012 470 M850 570 L900 590 Q990 590 1010 550 M914 410 Q912 396 930 400 L974 418 Q980 430 968 432 M950 404 Q950 370 976 366 Q996 374 984 392 L970 388 L966 412 M846 566 Q844 580 860 582 L904 596 M940 420 Q940 520 882 586 M966 432 Q1020 500 910 590 M920 412 Q840 500 880 580 M868 586 L856 614 M850 630 Q820 670 760 676 L758 706 Q820 700 860 634',
      'M120 630 Q114 616 126 612 L240 580 Q260 578 258 592 L216 606 Q210 650 240 690 Q262 690 252 706 Q230 712 216 686 L188 736 Q172 748 170 728 L198 680 Q170 650 180 644 L204 666 L200 614 L132 636 Z M166 586 Q160 566 180 568 L192 596 M264 744 L270 650 Q290 620 312 646 L354 720 Q350 736 336 728 L320 704 L286 714 L284 744 Q272 756 264 744 M286 696 L312 690 L292 660 Z',
      'M420 604 L434 632 M388 628 L410 650 M378 660 L404 664 M444 648 L612 662 Q648 668 642 706 Q640 776 606 776 L440 760 Q406 746 412 706 Q414 652 444 648 M566 658 Q570 644 592 646 Q610 650 612 662 M438 762 L440 776 L590 792 Q602 788 602 778',
      'M446 672 L462 668 Q474 670 474 684 L468 744 Q456 752 452 742 L456 690 L444 688 Q436 676 446 672 M514 682 L534 676 Q546 678 544 690 L536 750 Q524 756 520 746 L524 696 L514 696 Q508 688 514 682 M566 684 H594 Q610 690 606 714 Q614 730 608 744 Q594 756 560 752 Q550 744 562 736 L590 738 L592 726 L572 720 Q568 710 580 708 L592 704 L590 698 L564 696 Q558 688 566 684',
      'M0 684 Q16 668 40 676 Q76 682 72 706 Q62 722 40 722 Q20 748 0 744 M28 470 Q90 410 172 432 Q120 480 28 470 M70 454 L116 442 M2 490 Q80 480 122 544 Q60 556 0 510 M0 460 Q28 420 30 358 Q14 370 0 392 M0 524 Q44 560 46 628 Q10 610 0 586 M34 514 L76 526 M14 408 L0 446 M0 544 L18 578',
      'M70 860 Q60 830 84 806 Q76 780 104 784 Q120 760 144 774 Q174 768 180 796 L176 822 L196 856 L186 860 L190 882 Q170 888 154 880 M80 866 Q90 840 114 848 L130 830 Q120 806 146 808 L176 824 M110 860 Q94 850 100 870 L130 878 Q140 860 160 866 M0 884 Q60 880 80 870 M260 886 L276 860 L266 848 L292 838 L294 816 L314 824 Q320 800 338 808 Q342 822 328 834 L344 852 L304 874 L300 888 M300 856 L306 864 M412 888 Q416 864 436 868 L440 888',
      'M484 844 Q514 836 518 804 Q530 836 558 836 Q526 850 526 876 Q514 846 484 844 M720 888 Q680 820 700 790 L760 756 Q780 748 800 764 Q870 820 904 888 M804 872 Q812 880 808 884 M786 888 Q786 864 806 864 Q824 868 822 888 M810 850 V838 M774 862 L764 856 M784 854 L778 846 M836 854 L842 846 M848 864 L856 858',
      'M866 766 Q870 730 890 730 L912 744 M866 766 Q880 792 912 796 M920 688 Q930 668 950 670 Q968 672 974 686 M1000 686 Q1030 664 1052 686 M1124 660 L1148 624 M1124 660 L1180 636 M1212 634 L1220 686 M1042 862 L1084 880 L1104 862 M1176 888 L1206 862 M1210 888 L1240 862 M1250 888 L1300 862 M1380 888 Q1410 862 1430 888',
    ],
  },
  {
    x: 700,
    y: 970,
    w: 200,
    h: 260,
    left: 80,
    circles: [[522, 60, 21], [494, 187, 11], [503, 281, 21], [464, 382, 29], [564, 423, 12], [572, 528, 13], [573, 118, 22], [579, 162, 22], [585, 207, 22]],
    paths: [
      'M570 32 L600 28 M570 32 L578 96 M600 268 L586 266 Q578 270 576 288 L564 352 Q520 350 516 430 Q520 450 600 458 M598 320 L604 340 M558 430 L508 486 M548 432 L500 472 M486 478 L500 470 L514 480 L500 490 Z M600 630 L590 660 M600 696 L588 720 L600 724',
      'M404 524 Q440 470 480 474 Q530 490 508 560 Q500 650 488 700 M490 478 Q536 510 524 570 Q500 640 500 680 L490 700 M300 572 Q310 556 326 552 M402 540 Q404 562 422 560 M432 538 Q436 556 456 552 M404 530 L416 530 M470 770 Q500 766 508 732 Q520 764 548 770 Q514 780 508 812 Q498 780 470 770',
    ],
  },
  {
    x: 380,
    y: 1080,
    w: 400,
    h: 100,
    left: 20,
    circles: [[370, 120, 13], [570, 144, 21], [677, 76, 13], [1160, 80, 12]],
    paths: [
      'M0 160 Q60 208 136 208 Q290 200 330 70 M44 132 Q70 152 102 152 M154 146 L208 124 M58 70 Q90 98 130 98 Q180 98 210 70 M150 72 H434 M250 96 L270 76',
      'M330 242 Q390 160 490 126 Q506 122 508 136 Q510 190 496 242 M500 132 L420 242 M394 242 L398 230 L416 240 M468 70 Q490 92 518 90 Q530 80 514 70 M540 238 Q586 238 594 214 L598 242',
      'M644 242 L628 160 Q628 140 646 134 L820 100 M776 112 L802 242 M678 236 L770 218 M654 152 L674 168 M672 150 L656 170 M664 148 L664 172 M826 104 Q826 136 868 134 Q860 170 900 172 L916 160 M826 104 Q826 72 850 72 M906 70 Q920 130 960 136 Q1014 136 1022 70 M904 82 Q888 88 894 110 L918 114 M1022 76 Q1046 68 1042 90 L1020 96 M838 242 L916 160 L980 182 L1034 138 L1126 194 M942 136 L946 154 L920 160 M1000 132 L1010 146 M1040 144 Q1076 150 1070 110 L1064 96 Q1096 92 1104 70 L1136 242 M886 242 Q890 220 898 214 M1064 186 Q1090 200 1100 242 M1010 242 L1092 236 M956 84 Q968 88 978 80 M980 100 Q990 98 992 92',
    ],
  },
  {
    x: 190,
    y: 660,
    w: 400,
    h: 290,
    left: 70,
    circles: [[320, 812, 12]],
    paths: [
      'M414 0 Q430 30 520 36 M520 38 Q520 16 530 0 M660 0 Q676 20 672 38 M898 38 Q940 20 950 0 M970 20 H1000 L1030 0 M706 8 L736 0 L752 14 L722 34 Z M836 0 Q850 22 860 0 M580 810 L664 818 L680 838 M700 812 Q740 828 780 812 M840 838 L856 814 L876 838 M960 838 V812 M1040 838 V812 M1060 812 Q1080 840 1120 830 L1146 812 M1130 826 L1168 836',
    ],
  },
  {
    x: 320,
    y: 190,
    w: 240,
    h: 340,
    top: 110,
    circles: [[298, 826, 29], [216, 870, 21], [424, 847, 12], [378, 916, 37], [310, 942, 29], [230, 942, 13], [516, 946, 12], [645, 969, 13], [725, 832, 21]],
    paths: [
      'M180 700 Q220 770 180 830 Q160 850 130 854 M2 730 Q6 712 16 702 M30 728 L44 702 M156 702 Q190 770 150 816 L130 828 M84 744 L128 730 Q126 750 118 766 M240 702 Q244 760 300 766 L420 790 Q500 800 520 702 M350 702 L390 712',
      'M512 828 Q524 790 568 734 Q586 724 586 744 L560 790 M512 828 Q500 880 540 908 Q600 930 640 900 Q670 870 650 840 L636 830 M540 830 Q536 790 566 776 Q590 780 580 796 Q556 840 548 838 Q538 838 540 830 M580 796 Q600 776 610 796 L574 846 Q560 846 560 834 M610 796 Q640 798 636 820 L606 860 Q590 866 586 850 M636 820 L640 832 L620 838 L628 876 M620 846 Q620 864 604 860',
      'M622 706 Q650 712 680 704 M636 710 L654 764 Q660 776 676 772 L720 760 M682 706 Q696 720 700 766 M716 702 L720 716',
      'M688 984 Q680 950 700 930 L720 908 M84 984 L90 914 M130 906 L184 912 L172 984 M440 962 Q440 948 454 950 Q466 954 460 966 L466 978 L490 980 M330 984 Q370 954 430 966 L436 984',
    ],
  },
];

const DoodleSheets = () => (
  <>
    {sheets.map(({ x, y, w, h, left = 0, top = 0, circles, paths }) => (
      <svg
        key={`${x}-${y}`}
        x={x + left}
        y={y + top}
        width={w - left}
        height={h - top}
        viewBox={`${left * 3} ${top * 3} ${(w - left) * 3} ${(h - top) * 3}`}
      >
        {circles.map(([cx, cy, r], index) => (
          <circle key={index} cx={cx} cy={cy} r={r} />
        ))}
        <path d={paths.join(' ')} />
      </svg>
    ))}
  </>
);

const Wallpaper = () => (
  <svg
    className="pointer-events-none absolute top-0 left-0"
    width="900"
    height="1537"
    viewBox="0 0 900 1537"
    fill="none"
    stroke="#222222"
    strokeWidth="5"
    strokeLinecap="round"
    strokeLinejoin="round"
    aria-hidden="true"
  >
    <defs>
      <clipPath id="right-edge">
        <rect x="864" y="670" width="36" height="300" />
      </clipPath>
    </defs>
    <DoodleSheets />
    {/* the pattern starts over past the right edge of the tile */}
    <g clipPath="url(#right-edge)">
      <g transform="translate(837 0)">
        <DoodleSheets />
      </g>
    </g>
  </svg>
);

const EmojiDefs = () => (
  <svg className="absolute h-0 w-0" aria-hidden="true">
    <defs>
      <radialGradient id="face" cx="0.5" cy="0.45" r="0.56">
        <stop offset="0" stopColor="#f6df78" />
        <stop offset="0.65" stopColor="#f5d657" />
        <stop offset="0.88" stopColor="#f0b63a" />
        <stop offset="1" stopColor="#d98a28" />
      </radialGradient>
      <linearGradient id="shine" x1="0" y1="0" x2="0" y2="1">
        <stop offset="0" stopColor="#fff9c9" stopOpacity="0.95" />
        <stop offset="1" stopColor="#fbe36d" stopOpacity="0" />
      </linearGradient>
      <linearGradient id="tear" x1="0" y1="0" x2="0" y2="1">
        <stop offset="0" stopColor="#7cc6fa" />
        <stop offset="1" stopColor="#55b2f5" />
      </linearGradient>
      <linearGradient id="mouth" x1="0" y1="0" x2="0" y2="1">
        <stop offset="0" stopColor="#5b2d06" />
        <stop offset="1" stopColor="#a0651c" />
      </linearGradient>
      <linearGradient id="teeth" x1="0" y1="0" x2="1" y2="0">
        <stop offset="0" stopColor="#cfcfcf" />
        <stop offset="0.5" stopColor="#ffffff" />
        <stop offset="1" stopColor="#c9c9c9" />
      </linearGradient>
      <radialGradient id="heart" cx="0.5" cy="0.4" r="0.65">
        <stop offset="0" stopColor="#f0523d" />
        <stop offset="0.7" stopColor="#e8412f" />
        <stop offset="1" stopColor="#b9241b" />
      </radialGradient>
      <linearGradient id="heart-shine" x1="0" y1="0" x2="0" y2="1">
        <stop offset="0" stopColor="#ffd9cf" stopOpacity="0.95" />
        <stop offset="1" stopColor="#f0523d" stopOpacity="0" />
      </linearGradient>
    </defs>
  </svg>
);

const JoyEmoji = () => (
  <svg className="h-10 w-10" viewBox="0 0 120 120" role="img" aria-label="tears of joy">
    <circle cx="60" cy="60" r="55" fill="url(#face)" />
    <ellipse cx="60" cy="34" rx="42" ry="26" fill="url(#shine)" />
    <path d="M20 50 Q26 42 38 42 M82 42 Q94 42 100 50" fill="none" stroke="#8a5617" strokeWidth="3" strokeLinecap="round" />
    <path d="M24 62 Q38 50 52 61 M68 61 Q82 50 96 62" fill="none" stroke="#6b3b0c" strokeWidth="4" strokeLinecap="round" />
    <path d="M24 70 Q60 74 96 70 Q92 102 60 102 Q28 102 24 70 Z" fill="url(#mouth)" />
    <path d="M28 71 Q60 76 92 71 Q88 84 60 85 Q32 84 28 71 Z" fill="url(#teeth)" />
    <path d="M22 66 Q2 72 0 84 Q2 98 14 94 Q24 86 22 66 Z M98 66 Q118 72 120 84 Q118 98 106 94 Q96 86 98 66 Z" fill="url(#tear)" />
  </svg>
);

const SmirkEmoji = () => (
  <svg className="h-11 w-11" viewBox="0 0 132 132" role="img" aria-label="smirk">
    <circle cx="66" cy="66" r="63" fill="url(#face)" />
    <ellipse cx="66" cy="34" rx="48" ry="28" fill="url(#shine)" />
    <path d="M13 56 Q24 40 42 50 M90 50 Q108 40 119 56" fill="none" stroke="#80511a" strokeWidth="4" strokeLinecap="round" />
    <path d="M28 72 Q40 62 52 74 M84 72 Q98 64 110 74" fill="none" stroke="#5f350c" strokeWidth="4" strokeLinecap="round" />
    <path d="M34 70 Q40 82 51 74 Q44 67 34 70 Z M88 72 Q96 82 104 74 Q96 67 88 72 Z" fill="#5f350c" />
    <path d="M46 104 Q84 108 90 90" fill="none" stroke="#6b3b0c" strokeWidth="4" strokeLinecap="round" />
  </svg>
);

const SunglassesEmoji = () => (
  <svg className="h-11 w-11" viewBox="0 0 132 132" role="img" aria-label="sunglasses">
    <circle cx="66" cy="66" r="63" fill="url(#face)" />
    <ellipse cx="66" cy="34" rx="48" ry="28" fill="url(#shine)" />
    <path d="M8 44 Q34 38 60 46 Q66 48 72 46 Q98 38 124 44 L122 56 Q116 82 94 80 Q76 78 72 56 Q66 52 60 56 Q56 78 38 80 Q16 82 10 56 Z" fill="#1d1b1b" />
    <path d="M30 74 L52 50 L44 48 L22 66 Z M88 74 L110 50 L102 48 L80 66 Z" fill="#5a5a5a" />
    <path d="M36 92 Q66 110 96 92" fill="none" stroke="#6b3b0c" strokeWidth="4" strokeLinecap="round" />
  </svg>
);

const HeartEmoji = () => (
  <svg className="h-9 w-9" viewBox="0 0 108 108" role="img" aria-label="heart">
    <path d="M54 107 Q50 107 44 100 Q4 66 0 36 Q0 2 28 1 Q48 2 54 22 Q60 2 80 1 Q108 2 108 36 Q104 66 64 100 Q58 107 54 107 Z" fill="url(#heart)" />
    <ellipse cx="27" cy="15" rx="20" ry="12" fill="url(#heart-shine)" />
    <ellipse cx="81" cy="15" rx="20" ry="12" fill="url(#heart-shine)" />
  </svg>
);

const RoflEmoji = () => (
  <svg className="h-[125px] w-[128px]" viewBox="0 0 384 375" role="img" aria-label="rolling on the floor laughing">
    <circle cx="187" cy="188" r="184" fill="url(#face)" />
    <ellipse cx="180" cy="96" rx="132" ry="76" fill="url(#shine)" />
    <path d="M236 54 Q242 58 238 70 L216 116 Q212 124 222 126 Q256 132 270 140 Q270 146 258 144 Q210 144 188 136 Q178 132 188 116 Q206 76 236 54 Z M46 164 Q80 156 134 156 Q144 156 140 170 Q130 214 106 238 Q100 238 104 226 L114 188 Q116 178 104 176 Q66 172 46 164 Z" fill="#935d1c" />
    <path d="M94 278 Q220 250 308 154 Q334 190 312 250 Q280 336 176 334 Q112 322 94 278 Z" fill="url(#mouth)" />
    <path d="M104 284 Q226 254 306 168 Q316 186 308 200 Q236 290 124 304 Q110 298 104 284 Z" fill="url(#teeth)" />
    <path d="M296 134 Q330 108 358 110 Q384 114 384 138 Q380 160 352 164 Q322 158 296 134 Z M84 256 Q90 296 76 322 Q56 346 34 330 Q20 312 34 290 Q54 268 84 256 Z" fill="url(#tear)" stroke="#3f9adf" strokeWidth="2" />
  </svg>
);

const ReadTicks = () => (
  <svg className="h-[23px] w-[34px]" viewBox="0 0 34 23" fill="none" stroke="#6cb9ea" strokeWidth="2.7" strokeLinecap="round" strokeLinejoin="round" role="img" aria-label="read">
    <path d="M1.5 15.5 L7.6 21.3 L23 1.5" />
    <path d="M15 20 L17.4 21.3 L32.5 1.5" />
  </svg>
);

const Time = ({ value, read }: { value: string; read?: boolean }) => (
  <span className={`flex shrink-0 items-center gap-2 text-[27px] leading-5 tabular-nums ${read ? 'text-[#a2b3a9]' : 'text-[#9a9b9b]'}`}>
    <time>{value}</time>
    {read && <ReadTicks />}
  </span>
);

type BubbleProps = {
  lines: React.ReactNode[];
  time: string;
  sent?: boolean;
  tail?: boolean;
  timeBelow?: boolean;
  quote?: React.ReactNode;
};

const Bubble = ({ lines, time, sent, tail, timeBelow, quote }: BubbleProps) => {
  const last = lines[lines.length - 1];

  return (
    <div className={`relative w-fit rounded-[27px] ${sent ? 'self-end bg-[#254b38]' : 'self-start bg-[#242626]'}`}>
      {tail && (
        <svg className="absolute bottom-0 -left-[14px] h-12 w-10" viewBox="0 0 40 48" fill="#242626" aria-hidden="true">
          <path d="M14 0 Q14 34 0 47 Q12 49 22 41 Q28 46 40 48 V0 Z" />
        </svg>
      )}
      {quote}
      <div className={`relative pt-[10px] pb-4 pl-[21px] text-[36px] leading-[49px] text-white ${sent ? 'pr-5' : 'pr-[22px]'}`}>
        {lines.slice(0, -1).map((line, index) => (
          <p key={index} className="whitespace-nowrap">{line}</p>
        ))}
        <div className="flex items-end justify-between gap-7">
          <p className="flex items-center whitespace-nowrap">{last}</p>
          {!timeBelow && <Time value={time} read={sent} />}
        </div>
        {timeBelow && (
          <div className="flex h-[39px] items-end justify-end">
            <Time value={time} read={sent} />
          </div>
        )}
      </div>
    </div>
  );
};

const Reaction = ({ sent, children }: { sent?: boolean; children: React.ReactNode }) => (
  <button
    type="button"
    className={`relative -mt-4 flex h-[55px] w-[76px] items-center justify-center rounded-full bg-[#242626] ring-2 ring-[#0b0c0b] ${sent ? 'mr-[22px] self-end' : 'ml-[23px] self-start'}`}
  >
    {children}
  </button>
);

const Quote = () => (
  <div className="px-2 pt-2">
    <blockquote className="flex h-[174px] overflow-hidden rounded-2xl bg-[#182e23]">
      <div className="w-[9px] shrink-0 bg-[#6ba4f6]" />
      <div className="pt-[19px] pr-6 pl-5 text-[28px] leading-10 text-[#a0a8a3]">
        <div className="relative -mb-3 ml-[2px] h-[62px] w-[282px] bg-black" />
        <p className="whitespace-nowrap">Oglosili, zakwalifikowalem sie. Jutro o 7 mam</p>
        <p>rwkl</p>
      </div>
    </blockquote>
  </div>
);

const dateLink = 'underline decoration-[#777979] decoration-2 underline-offset-[7px]';

export default function App() {
  return (
    <main className="relative overflow-hidden bg-[#090909] font-['Inter',sans-serif]">
      <Wallpaper />
      <EmojiDefs />
      <div className="relative z-10 h-[13px] bg-[#131313]" />

      <div className="relative flex flex-col gap-[10px] px-[38px] pb-[10px]">
        <div className="-mt-5 h-7 w-[565px] self-start rounded-b-[27px] bg-[#242626]" />
        <Reaction>
          <JoyEmoji />
        </Reaction>
        <Bubble lines={['Ale nie wiem czy w kontekscie', 'rozmow']} time="18:18" />
        <Bubble lines={['To mowil']} time="18:18" />
        <Bubble lines={['W kazdym razie mam 2 konkurencje', 'zaloczone']} time="18:18" />
        <Bubble lines={['Zaliczone*']} time="18:19" />
        <Bubble
          tail
          lines={[
            <>Oglosili, zakwalifikowalem sie. <a href="#jutro" className={dateLink}>Jutro</a></>,
            <><a href="#jutro" className={dateLink}>o 7</a><span className="whitespace-pre"> mam rwkl</span></>,
          ]}
          time="19:27"
        />

        <div className="h-[11px]" />
        <Bubble sent quote={<Quote />} lines={['zajebiście']} time="19:34" />
        <Bubble
          sent
          timeBelow
          lines={[
            'Czyli robota wykonana. Gratuluję',
            <>
              dostania sie na podoficerke
              <span className="ml-3 flex gap-2 pr-1">
                <SmirkEmoji />
                <SunglassesEmoji />
              </span>
            </>,
          ]}
          time="19:34"
        />
        <Reaction sent>
          <HeartEmoji />
        </Reaction>
        <Bubble sent lines={['Możesz zjeść pizzę']} time="19:34" />
        <Reaction sent>
          <HeartEmoji />
        </Reaction>

        <div className="mt-[21px] mb-[7px] self-end">
          <RoflEmoji />
        </div>
        <div className="flex h-[58px] items-center self-end rounded-[18px] bg-[#254b38] pr-5 pl-6">
          <Time value="19:34" read />
        </div>
      </div>

      <div className="relative h-[10px] bg-[#131313]" />

      <button
        type="button"
        aria-label="Scroll to bottom"
        className="absolute right-5 bottom-[65px] flex h-[71px] w-[71px] items-center justify-center rounded-full bg-[#242626]"
      >
        <svg className="h-[18px] w-7" viewBox="0 0 28 18" fill="none" stroke="white" strokeWidth="4" strokeLinecap="round" strokeLinejoin="round">
          <path d="M2 2 L14 14 L26 2" />
        </svg>
      </button>
    </main>
  );
}
